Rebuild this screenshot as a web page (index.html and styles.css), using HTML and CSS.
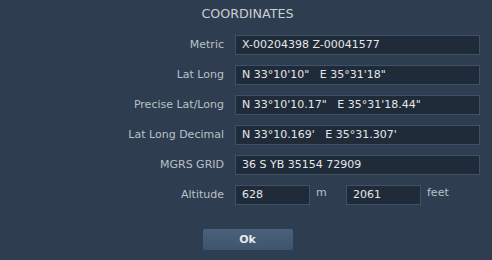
FILE: index.html
```html
<!DOCTYPE html>
<html lang="en">
<head>
<meta charset="UTF-8">
<title>Coordinates</title>
<link rel="stylesheet" href="styles.css">
</head>
<body>

<div class="dialog">
  <h1 class="title">COORDINATES</h1>

  <div class="form">
    <label>Metric</label>
    <div class="field">X-00204398 Z-00041577</div>

    <label>Lat Long</label>
    <div class="field">N 33°10'10" &nbsp; E 35°31'18"</div>

    <label>Precise Lat/Long</label>
    <div class="field">N 33°10'10.17" &nbsp; E 35°31'18.44"</div>

    <label>Lat Long Decimal</label>
    <div class="field">N 33°10.169' &nbsp; E 35°31.307'</div>

    <label>MGRS GRID</label>
    <div class="field">36 S YB 35154 72909</div>

    <label>Altitude</label>
    <div class="alt">
      <div class="field small">628</div>
      <span class="unit">m</span>
      <div class="field small">2061</div>
      <span class="unit">feet</span>
    </div>
  </div>

  <div class="actions">
    <button class="ok">Ok</button>
  </div>
</div>

</body>
</html>
```

FILE: styles.css
```css
body{
 margin:0;
 width:492px;
 height:260px;
 overflow:hidden;
 background:#2e3d4f;
 font-family:"DejaVu Sans",sans-serif;
 font-size:11px;
 color:#b9c1ca;
}

.dialog{
 padding-top:5px;
}

.title{
 margin:0 0 0 0;
 height:18px;
 font-size:12.7px;
 font-weight:normal;
 text-align:center;
 color:#c9ced4;
 line-height:18px;
 padding-left:3px;
}

/* FORM */
.form{
 margin-top:12px;
 display:grid;
 grid-template-columns:224px 245px;
 column-gap:11px;
 row-gap:10px;
 grid-auto-rows:20px;
}

.form label{
 text-align:right;
 line-height:20px;
}

.field{
 box-sizing:border-box;
 height:20px;
 background:#202b39;
 border:1px solid #3e5167;
 color:#e4e7ea;
 padding:0 6px;
 line-height:18px;
 white-space:nowrap;
}

.alt{
 display:flex;
 align-items:flex-start;
}

.field.small{
 width:75px;
}

.unit{
 line-height:16px;
 margin-left:6px;
 width:30px;
}

/* BUTTON */
.actions{
 display:flex;
 justify-content:center;
 margin-top:24px;
 padding-left:3px;
}

.ok{
 width:90px;
 height:21px;
 border:none;
 border-radius:2px;
 background:linear-gradient(#4b617b,#3f546d);
 color:#e6e9ec;
 font-family:"DejaVu Sans",sans-serif;
 font-size:11px;
 font-weight:bold;
 padding:0;
}
```
